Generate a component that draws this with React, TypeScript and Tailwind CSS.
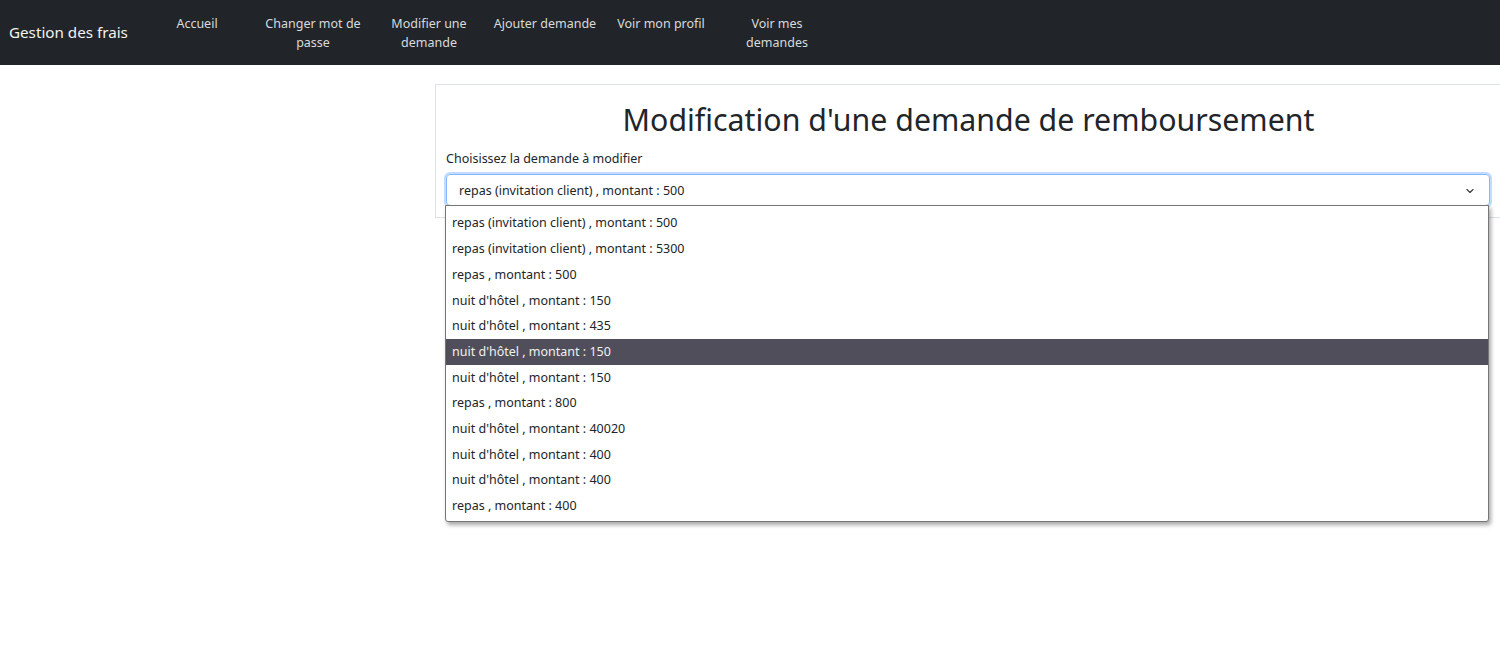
import React from "react";

const navItems = [
  ["Accueil"],
  ["Changer mot de", "passe"],
  ["Modifier une", "demande"],
  ["Ajouter demande"],
  ["Voir mon profil"],
  ["Voir mes", "demandes"],
];

const options = [
  "repas (invitation client) , montant : 500",
  "repas (invitation client) , montant : 5300",
  "repas , montant : 500",
  "nuit d'hôtel , montant : 150",
  "nuit d'hôtel , montant : 435",
  "nuit d'hôtel , montant : 150",
  "nuit d'hôtel , montant : 150",
  "repas , montant : 800",
  "nuit d'hôtel , montant : 40020",
  "nuit d'hôtel , montant : 400",
  "nuit d'hôtel , montant : 400",
  "repas , montant : 400",
];

export default function App() {
  return (
    <div
      className="min-h-[664px] w-[1500px] overflow-hidden bg-white text-[#212529]"
      style={{ fontFamily: '"Noto Sans", "Open Sans", sans-serif' }}
    >
      <nav className="flex h-[65px] bg-[#212529]">
        <div className="flex w-[139px] items-center pl-[9px] text-[15.2px] text-[#f2f2f2]">
          Gestion des frais
        </div>
        <div className="flex pt-[14px]">
          {navItems.map((lines, i) => (
            <div
              key={i}
              className="w-[116px] text-center text-[12.5px] leading-[19px] text-[#d9dadb]"
            >
              {lines.map((l, j) => (
                <div key={j}>{l}</div>
              ))}
            </div>
          ))}
        </div>
      </nav>
      <div className="pl-[435px] pt-[19px]">
        <div className="w-[1080px] border border-[#dee2e6] px-[10px] pb-[11px] pt-[15px]">
          <h2 className="w-[1045px] text-center text-[30.3px] leading-[40px] text-[#212529]">
            Modification d'une demande de remboursement
          </h2>
          <div className="mt-[10px] text-[12.5px] leading-[18px]">
            Choisissez la demande à modifier
          </div>
          <div className="relative mt-[6px] w-[1044px]">
            <div className="flex h-[32px] items-center justify-between rounded-[4px] border border-[#86b7fe] pl-[12px] pr-[14px] pt-[2px] text-[12.5px] shadow-[0_0_0_2px_rgba(13,110,253,0.25)]">
              <span>repas (invitation client) , montant : 500</span>
              <svg width="10" height="8" viewBox="0 0 16 16" fill="none">
                <path
                  d="M2 5l6 6 6-6"
                  stroke="#343a40"
                  strokeWidth="2.2"
                  strokeLinecap="round"
                  strokeLinejoin="round"
                />
              </svg>
            </div>
            <div className="absolute left-[-1px] top-[31px] z-10 w-[1044px] rounded-b-[3px] border border-[#767676] bg-white pb-[2px] pt-[5px] shadow-[2px_3px_4px_rgba(0,0,0,0.35)]">
              {options.map((o, i) => (
                <div
                  key={i}
                  className={
                    "flex h-[25.7px] items-center pl-[6px] text-[12.5px] " +
                    (i === 5 ? "bg-[#4f4e5a] text-[#f0f0f0]" : "text-[#212529]")
                  }
                >
                  {o}
                </div>
              ))}
            </div>
          </div>
        </div>
      </div>
    </div>
  );
}
